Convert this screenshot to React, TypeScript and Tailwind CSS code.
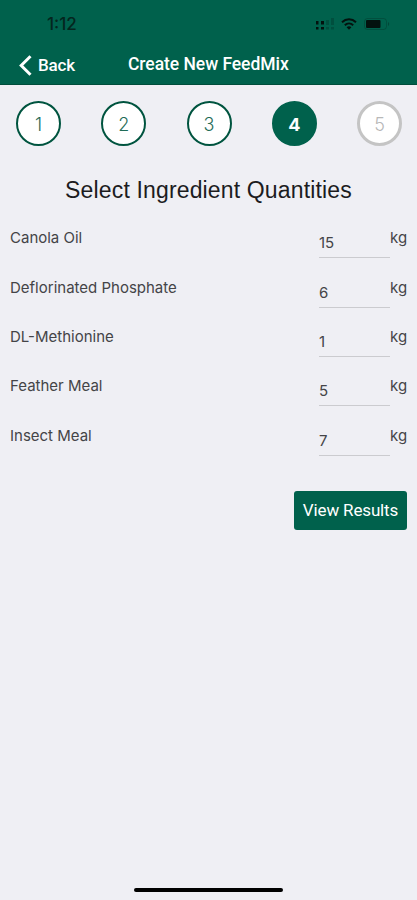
import React from 'react';

interface Ingredient {
  name: string;
  quantity: number;
}

const ingredients: Ingredient[] = [
  { name: 'Canola Oil', quantity: 15 },
  { name: 'Deflorinated Phosphate', quantity: 6 },
  { name: 'DL-Methionine', quantity: 1 },
  { name: 'Feather Meal', quantity: 5 },
  { name: 'Insect Meal', quantity: 7 },
];

const CURRENT_STEP = 4;

function StatusBar() {
  return (
    <div className="flex h-12 items-center justify-between pl-[47px] pr-[27px] text-[#04261e]">
      <span className="text-[17px] font-medium leading-none">1:12</span>
      <div className="flex items-center text-[#03120e]">
        {/* Dual SIM signal */}
        <svg width="20" height="14" viewBox="0 0 20 14" fill="currentColor">
          <rect x="1" y="4" width="2.5" height="3.5" />
          <rect x="6" y="4" width="3" height="3.5" />
          <rect x="1" y="10" width="2.5" height="2.5" />
          <rect x="6" y="10" width="3" height="2.5" />
          <g opacity="0.22">
            <rect x="11" y="3" width="3" height="5" />
            <rect x="16" y="1" width="3" height="7" />
            <rect x="11" y="10" width="3" height="2.5" />
            <rect x="16" y="10" width="3" height="2.5" />
          </g>
        </svg>
        <svg className="ml-[6px]" width="16" height="12" viewBox="0 0 16 12" fill="none" stroke="currentColor" strokeWidth="2">
          <path d="M1 4.2C5 0.4 11 0.4 15 4.2" />
          <path d="M3.8 7.2C6.2 5 9.8 5 12.2 7.2" />
          <path d="M8 11.7L5.6 9.2C7 8 9 8 10.4 9.2Z" fill="currentColor" stroke="none" />
        </svg>
        <svg className="ml-[7px]" width="26" height="12" viewBox="0 0 26 12">
          <rect x="0.5" y="0.5" width="22" height="11" rx="3" fill="none" stroke="currentColor" opacity="0.22" />
          <rect x="2" y="2" width="14.5" height="8" rx="1" fill="currentColor" />
          <path d="M24 4c1.6 0.6 1.6 3.4 0 4z" fill="currentColor" opacity="0.3" />
        </svg>
      </div>
    </div>
  );
}

function NavBar() {
  return (
    <div className="grid h-[37px] grid-cols-[128px_1fr] items-center pb-[3px] text-white">
      <button className="flex items-center gap-[6px] pl-[19px]">
        <svg width="13" height="21" viewBox="0 0 13 21" fill="none" stroke="currentColor" strokeWidth="3">
          <path d="M11.5 1.2L2.2 10.5L11.5 19.8" />
        </svg>
        <span className="font-['Roboto',sans-serif] text-[17px] font-medium leading-none tracking-[-0.15px]">Back</span>
      </button>
      <h1 className="whitespace-nowrap font-['Roboto',sans-serif] text-[17.5px] font-medium leading-none tracking-[-0.05px]">Create New FeedMix</h1>
    </div>
  );
}

function StepCircle({ step }: { step: number }) {
  let look = 'border-2 border-[#00543f] bg-white font-light text-[#1f6b57]';
  if (step === CURRENT_STEP) look = 'border-2 border-[#00614c] bg-[#00614c] font-bold text-white';
  if (step > CURRENT_STEP) look = 'border-[3px] border-[#c4c4c4] bg-white font-light text-[#b8b8b8]';

  return (
    <div className={`flex h-[45px] w-[45px] items-center justify-center rounded-full pt-px text-[18px] ${look}`}>
      {step}
    </div>
  );
}

function IngredientRow({ name, quantity }: Ingredient) {
  return (
    <div className="flex h-[49.4px] items-start text-[15px] leading-[18px] text-[#444447]">
      <span className="flex-1">{name}</span>
      <span className="h-[29px] w-[71px] border-b border-[#cbcbcf] pt-[5px]">{quantity}</span>
      <span className="w-[17px]">kg</span>
    </div>
  );
}

export default function App() {
  return (
    <div className="flex h-[900px] w-[417px] flex-col overflow-hidden bg-[#efeff4] font-['Inter',sans-serif]">
      <header className="h-[85px] shrink-0 border-b border-[#004d3b] bg-[#00614c]">
        <StatusBar />
        <NavBar />
      </header>

      <div className="flex justify-between pl-[16px] pr-[15px] pt-4">
        {[1, 2, 3, 4, 5].map((step) => (
          <StepCircle key={step} step={step} />
        ))}
      </div>

      <h2 className="mt-[30px] text-center font-['Liberation_Sans',Arial,sans-serif] text-[23px] leading-[28px] tracking-[0.15px] text-[#1c1c1e]">
        Select Ingredient Quantities
      </h2>

      <div className="mt-[25.3px] flex flex-col px-[10px]">
        {ingredients.map((item) => (
          <IngredientRow key={item.name} {...item} />
        ))}
      </div>

      <div className="mt-[14.7px] flex justify-end pr-[10px]">
        <button className="h-[39px] w-[113px] rounded-[3px] bg-[#00614c] pt-px font-['Roboto',sans-serif] text-[17px] tracking-[-0.15px] text-white">
          View Results
        </button>
      </div>

      <div className="mx-auto mb-[8px] mt-auto h-[4px] w-[149px] rounded-full bg-black" />
    </div>
  );
}
